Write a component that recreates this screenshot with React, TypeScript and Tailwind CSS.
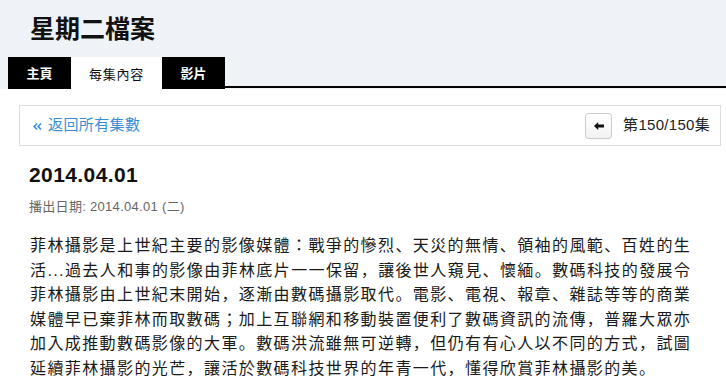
const sans = { fontFamily: '"Liberation Sans", "Noto Sans CJK JP", sans-serif' };

const tabs = [
  { label: "主頁", active: false, w: "w-[63px]" },
  { label: "每集內容", active: true, w: "w-[91px]" },
  { label: "影片", active: false, w: "w-[63px]" },
];

const body =
  "菲林攝影是上世紀主要的影像媒體：戰爭的慘烈、天災的無情、領袖的風範、百姓的生活...過去人和事的影像由菲林底片一一保留，讓後世人窺見、懷緬。數碼科技的發展令菲林攝影由上世紀末開始，逐漸由數碼攝影取代。電影、電視、報章、雜誌等等的商業媒體早已棄菲林而取數碼；加上互聯網和移動裝置便利了數碼資訊的流傳，普羅大眾亦加入成推動數碼影像的大軍。數碼洪流雖無可逆轉，但仍有有心人以不同的方式，試圖延續菲林攝影的光芒，讓活於數碼科技世界的年青一代，懂得欣賞菲林攝影的美。";

function Header() {
  return (
    <header className="bg-[#eff3f7]">
      <h1 className="pl-[30px] pt-[14px] h-[44px] text-[25px] leading-[30px] font-bold text-[#111] mb-[13px]">
        星期二檔案
      </h1>
      <nav className="flex items-stretch h-[32px] pl-2">
        {tabs.map((t) => (
          <div
            key={t.label}
            className={
              t.active
                ? `${t.w} bg-white text-[#111] flex items-center justify-center pt-[3px] text-[13px] tracking-[0.8px]`
                : `${t.w} bg-black text-white flex items-center justify-center font-bold text-[13px] pt-[1px]`
            }
          >
            {t.label}
          </div>
        ))}
        <div className="flex-1 border-b-2 border-black mb-[1px]" />
      </nav>
    </header>
  );
}

export default function App() {
  return (
    <div className="min-h-[389px] bg-white text-[#222]" style={sans}>
      <Header />
      <main>
        <div className="ml-[19px] w-[702px] mt-[16px] h-[41px] border border-[#dddddd] flex items-center justify-between pl-[12px] pr-[10px]">
          <a className="flex items-center gap-[6px] text-[15px] text-[#3a8ed6] tracking-[0.4px]">
            <svg width="10" height="9" viewBox="0 0 10 9" className="mt-[1px]">
              <path d="M4.5 1 L1 4.5 L4.5 8 L5.6 6.9 L3.2 4.5 L5.6 2.1 Z" fill="#3a8ed6" />
              <path d="M8.5 1 L5 4.5 L8.5 8 L9.6 6.9 L7.2 4.5 L9.6 2.1 Z" fill="#3a8ed6" />
            </svg>
            返回所有集數
          </a>
          <div className="flex items-center gap-[11px]">
            <button className="w-[27px] h-[26px] border border-[#cccccc] rounded-[3px] bg-gradient-to-b from-white to-[#f2f2f2] flex items-center justify-center">
              <svg width="10" height="8" viewBox="0 0 10 8">
                <path d="M0 4 L4.2 0 L4.2 2.6 L10 2.6 L10 5.4 L4.2 5.4 L4.2 8 Z" fill="#111" />
              </svg>
            </button>
            <span className="text-[15px] text-[#222] tracking-[0.3px]">第150/150集</span>
          </div>
        </div>

        <div className="ml-[29px] mt-[15px]">
          <h2 className="text-[21px] leading-[28px] font-bold text-[#111] tracking-[0.4px]">2014.04.01</h2>
          <p className="mt-[8px] text-[13px] leading-[20px] text-[#666] tracking-[0.3px]">
            播出日期: 2014.04.01 (二)
          </p>
        </div>

        <p className="ml-[30px] mt-[17px] w-[668px] text-[16px] leading-[24.5px] tracking-[1.4px] text-[#1a1a1a]">
          {body}
        </p>
      </main>
    </div>
  );
}
